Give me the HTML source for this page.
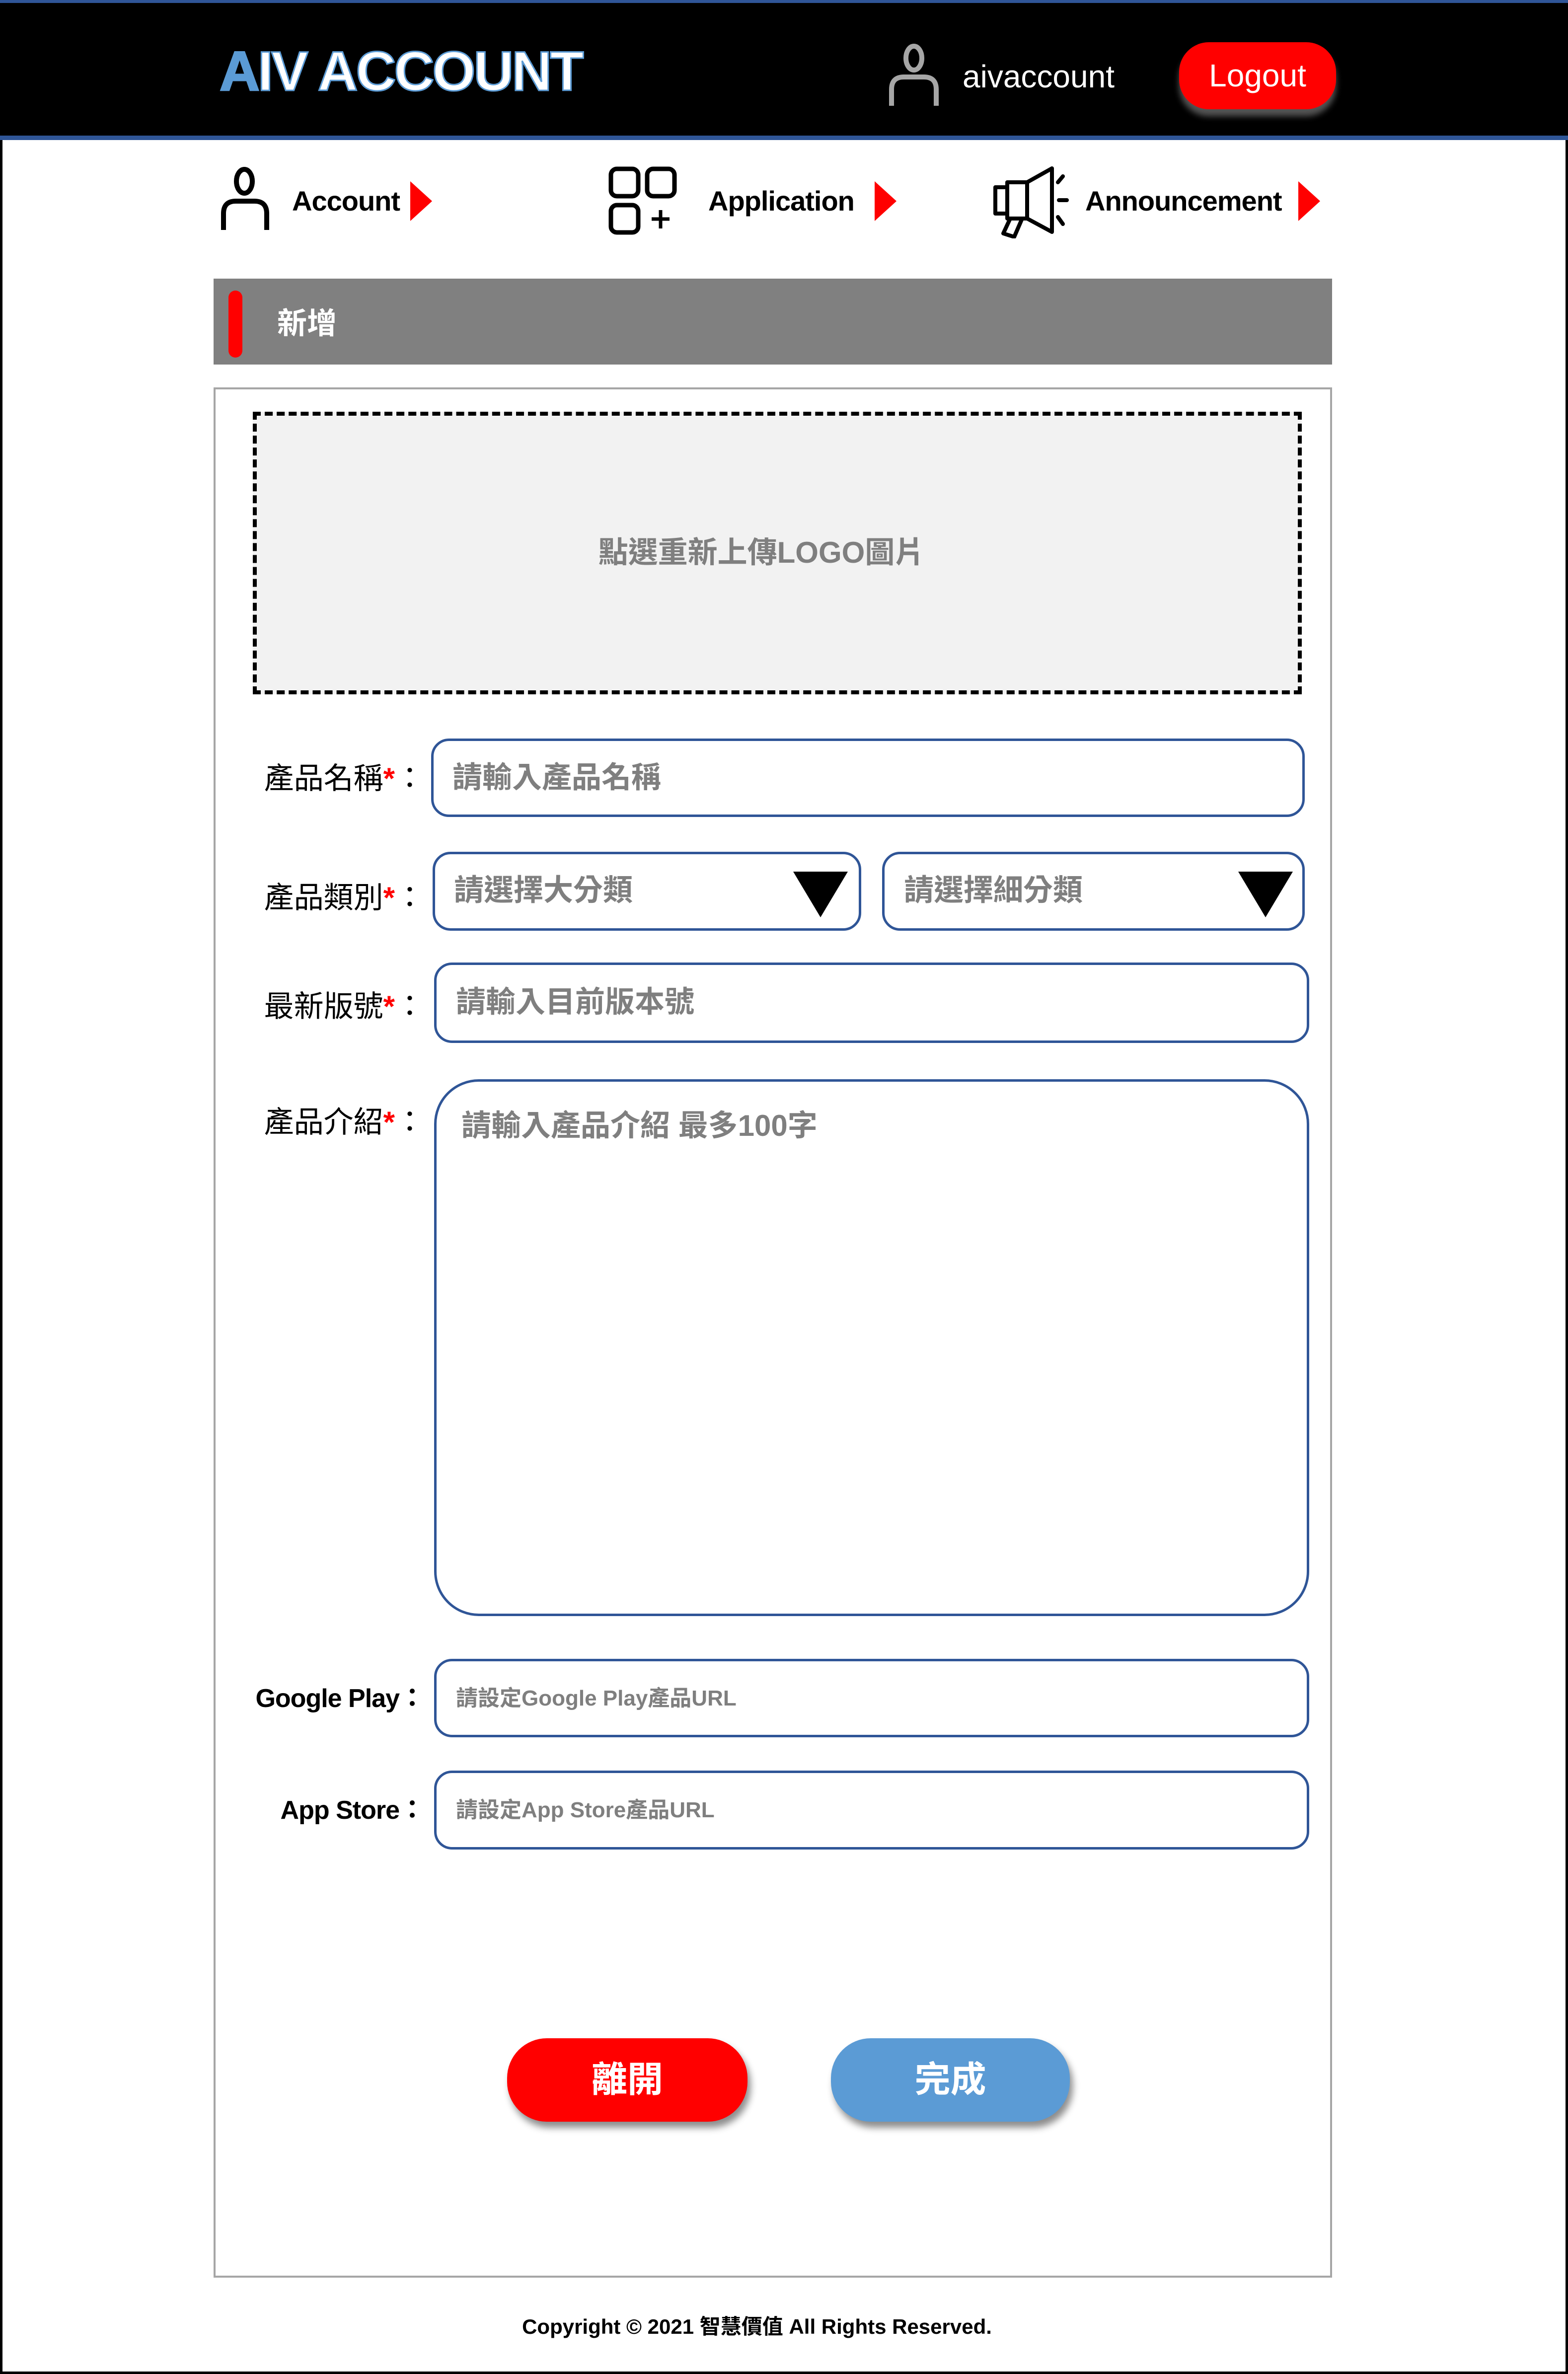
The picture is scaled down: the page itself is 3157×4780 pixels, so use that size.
<!DOCTYPE html>
<html><head><meta charset="utf-8"><style>
*{margin:0;padding:0;box-sizing:border-box}
body{width:3157px;height:4780px;position:relative;background:#fff;font-family:"Liberation Sans","Noto Sans CJK TC",sans-serif;overflow:hidden}
.a{position:absolute}
.frame{left:0;top:0;width:3157px;height:4780px;border:5px solid #000}
.hdr{left:0;top:0;width:3157px;height:282px;background:#000;border-top:6px solid #2f5597;border-bottom:9px solid #2f5597}
.logo{left:442px;top:88px;font-size:112px;font-weight:bold;color:#fff;-webkit-text-stroke:3px #5b9bd5;letter-spacing:-4px;line-height:1}
.nav{font-size:56px;font-weight:bold;color:#000;line-height:1;letter-spacing:-1px}
.tri{width:0;height:0;border-top:40px solid transparent;border-bottom:40px solid transparent;border-left:44px solid #f00}
.lbl{font-size:60px;color:#000;text-align:right;width:450px;line-height:1}
.lbl b{color:#f00;font-weight:bold}
.inp{border:5px solid #2f5597;border-radius:36px;background:#fff}
.ph{font-size:60px;font-weight:bold;color:#7f7f7f;line-height:1;white-space:nowrap}
.dt{width:0;height:0;border-left:55px solid transparent;border-right:55px solid transparent;border-top:92px solid #000}
.btn{border-radius:80px;color:#fff;font-size:72px;font-weight:bold;text-align:center;line-height:168px;box-shadow:6px 12px 14px rgba(0,0,0,.45)}
</style></head><body>
<div class="a frame"></div>
<div class="a hdr"></div>
<div class="a logo"><span style="color:#5b9bd5">A</span>IV ACCOUNT</div>
<svg class="a" style="left:1785px;top:85px" width="110" height="130" viewBox="0 0 110 130"><ellipse cx="55" cy="32" rx="16" ry="24" fill="none" stroke="#a6a6a6" stroke-width="10"/><path d="M10 128 V95 Q10 70 35 70 H75 Q100 70 100 95 V128" fill="none" stroke="#a6a6a6" stroke-width="10"/></svg>
<div class="a" style="left:1938px;top:122px;font-size:64px;color:#fff;line-height:1">aivaccount</div>
<div class="a" style="left:2374px;top:85px;width:316px;height:135px;background:#f00;border-radius:60px;color:#fff;font-size:64px;text-align:center;line-height:135px;box-shadow:0 14px 12px rgba(120,120,120,.7)">Logout</div>

<svg class="a" style="left:442px;top:335px" width="110" height="130" viewBox="0 0 110 130"><ellipse cx="50" cy="30" rx="16" ry="24" fill="none" stroke="#000" stroke-width="10"/><path d="M8 128 V95 Q8 70 33 70 H70 Q95 70 95 95 V128" fill="none" stroke="#000" stroke-width="10"/></svg>
<div class="a nav" style="left:588px;top:377px">Account</div>
<div class="a tri" style="left:826px;top:365px"></div>

<svg class="a" style="left:1225px;top:335px" width="140" height="140" viewBox="0 0 140 140"><rect x="5" y="5" width="55" height="55" rx="12" fill="none" stroke="#000" stroke-width="9"/><rect x="78" y="5" width="55" height="55" rx="12" fill="none" stroke="#000" stroke-width="9"/><rect x="5" y="78" width="55" height="55" rx="12" fill="none" stroke="#000" stroke-width="9"/><path d="M105 88 V125 M87 106 H123" stroke="#000" stroke-width="7"/></svg>
<div class="a nav" style="left:1426px;top:377px">Application</div>
<div class="a tri" style="left:1761px;top:365px"></div>

<svg class="a" style="left:2000px;top:335px" width="160" height="145" viewBox="0 0 160 145"><g fill="none" stroke="#000" stroke-width="8" stroke-linejoin="round"><path d="M4 42 H28 V95 H4 Z"/><path d="M28 32 H68 V105 H28 Z"/><path d="M68 32 L118 4 V132 L68 105"/><path d="M34 105 L20 135 L42 142 L58 105"/></g><path d="M130 32 L140 20 M132 68 H148 M130 102 L140 116" stroke="#000" stroke-width="8" stroke-linecap="round"/></svg>
<div class="a nav" style="left:2185px;top:377px">Announcement</div>
<div class="a tri" style="left:2614px;top:365px"></div>

<div class="a" style="left:430px;top:561px;width:2252px;height:173px;background:#808080"></div>
<div class="a" style="left:460px;top:585px;width:28px;height:135px;background:#f00;border-radius:14px"></div>
<div class="a" style="left:558px;top:622px;font-size:60px;font-weight:bold;color:#fff;line-height:1">新增</div>

<div class="a" style="left:430px;top:780px;width:2252px;height:3806px;border:4px solid #a6a6a6"></div>
<div class="a" style="left:509px;top:829px;width:2112px;height:569px;background:#f2f2f2;border:8px dashed #000"></div>
<div class="a ph" style="left:0;width:3066px;text-align:center;top:1083px">點選重新上傳LOGO圖片</div>

<div class="a lbl" style="left:405px;top:1538px">產品名稱<b>*</b>：</div>
<div class="a inp" style="left:868px;top:1487px;width:1759px;height:158px"></div>
<div class="a ph" style="left:911px;top:1536px">請輸入產品名稱</div>

<div class="a lbl" style="left:405px;top:1778px">產品類別<b>*</b>：</div>
<div class="a inp" style="left:871px;top:1715px;width:863px;height:159px"></div>
<div class="a ph" style="left:914px;top:1763px">請選擇大分類</div>
<div class="a dt" style="left:1597px;top:1755px"></div>
<div class="a inp" style="left:1776px;top:1715px;width:851px;height:159px"></div>
<div class="a ph" style="left:1820px;top:1763px">請選擇細分類</div>
<div class="a dt" style="left:2493px;top:1755px"></div>

<div class="a lbl" style="left:405px;top:1997px">最新版號<b>*</b>：</div>
<div class="a inp" style="left:874px;top:1938px;width:1762px;height:162px"></div>
<div class="a ph" style="left:918px;top:1988px">請輸入目前版本號</div>

<div class="a lbl" style="left:405px;top:2230px">產品介紹<b>*</b>：</div>
<div class="a inp" style="left:874px;top:2173px;width:1762px;height:1081px;border-radius:90px"></div>
<div class="a ph" style="left:929px;top:2237px">請輸入產品介紹 最多100字</div>

<div class="a lbl" style="left:405px;top:3394px;font-weight:bold;font-size:52px;letter-spacing:-1px">Google Play：</div>
<div class="a inp" style="left:874px;top:3340px;width:1762px;height:158px"></div>
<div class="a ph" style="left:918px;top:3398px;font-size:44px">請設定Google Play產品URL</div>

<div class="a lbl" style="left:405px;top:3619px;font-weight:bold;font-size:52px;letter-spacing:-1px">App Store：</div>
<div class="a inp" style="left:874px;top:3565px;width:1762px;height:159px"></div>
<div class="a ph" style="left:918px;top:3623px;font-size:44px">請設定App Store產品URL</div>

<div class="a btn" style="left:1021px;top:4104px;width:484px;height:168px;background:#f00">離開</div>
<div class="a btn" style="left:1673px;top:4104px;width:481px;height:168px;background:#5b9bd5">完成</div>

<div class="a" style="left:0;width:3048px;text-align:center;top:4664px;font-size:42px;font-weight:bold;color:#000;line-height:1">Copyright © 2021 智慧價值 All Rights Reserved.</div>
</body></html>
